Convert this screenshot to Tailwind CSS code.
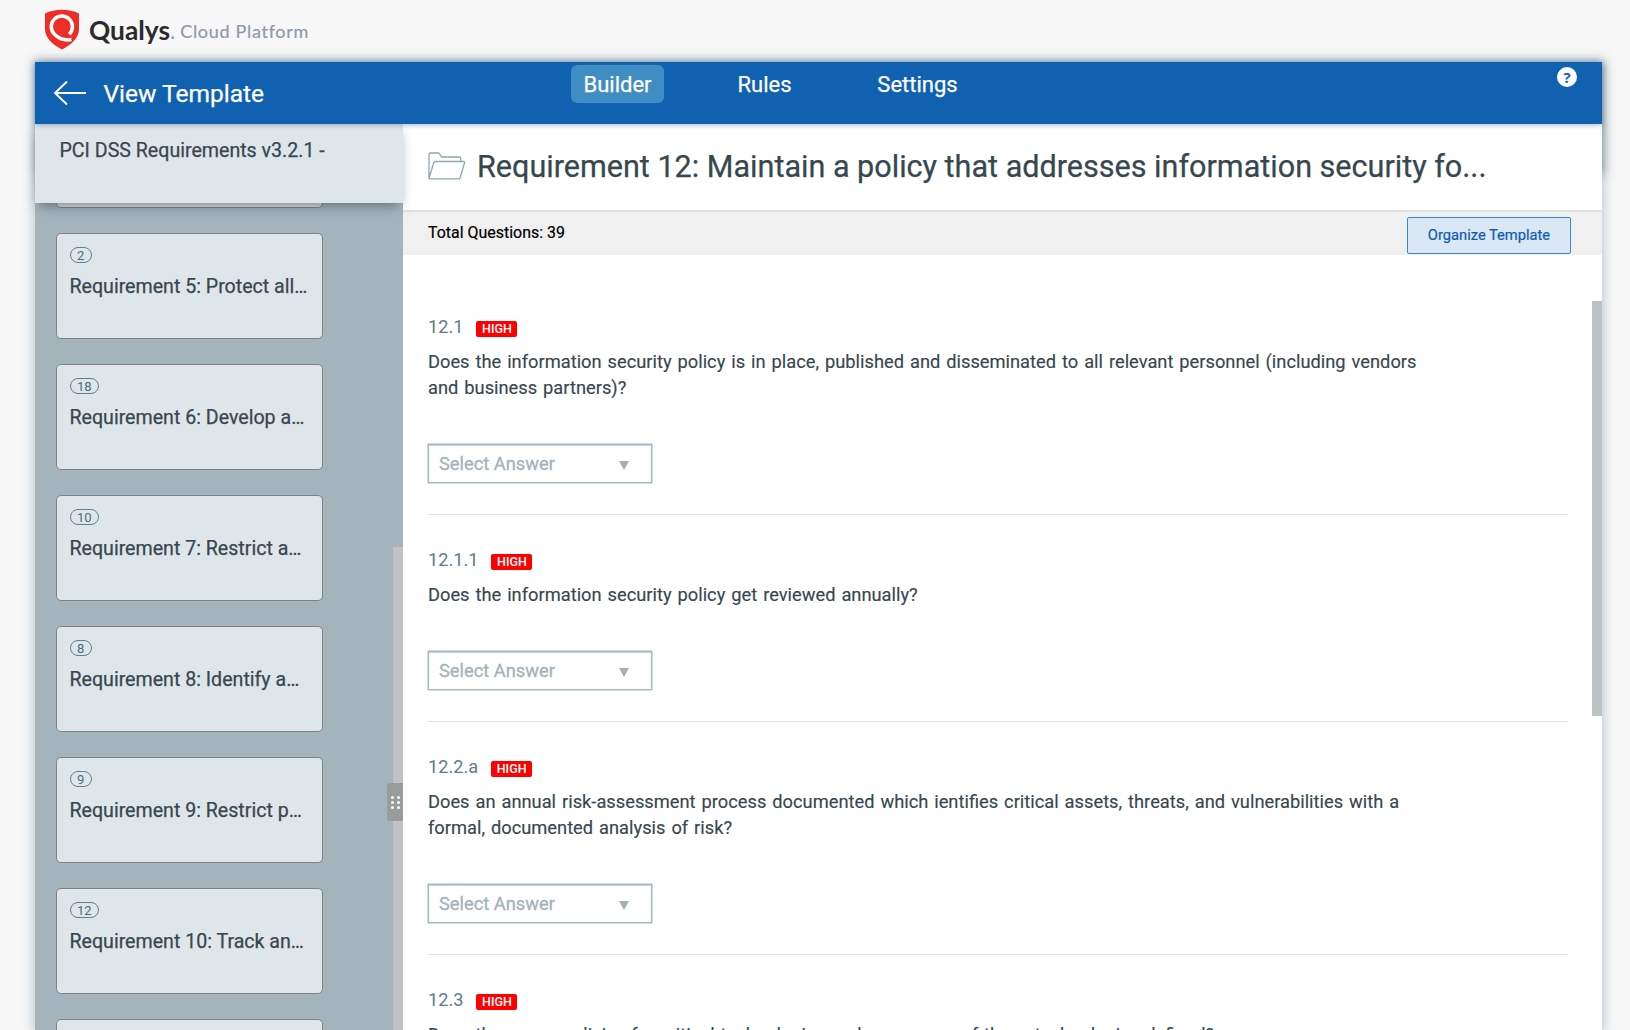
<!DOCTYPE html>
<html lang="en">
<head>
<meta charset="utf-8">
<title>View Template</title>
<script src="https://cdn.jsdelivr.net/npm/@tailwindcss/browser@4"></script>
</head>
<body class="relative flex h-[1030px] w-[1630px] flex-col overflow-hidden bg-[#f7f7f7] font-['Roboto',sans-serif] text-[#37474f]">

<!-- Brand bar -->
<header class="flex h-[62px] shrink-0 items-center pl-[44px] font-['Lato',sans-serif]">
  <svg class="mb-[3px] h-[41px] w-[36px] shrink-0" viewBox="0 0 36 41" fill="none">
    <path d="M1 4.500C6 2 12 .8 18 .8S30 2 35 4.500V20c0 9-7.500 15.500-17 20.500C8.500 35.500 1 29 1 20Z" fill="#ed2e26"/>
    <path d="M25.200 25.200A10.600 10.600 0 1 0 10.500 25.200C14 28.800 20 31.800 27.500 30.600" stroke="#fff" stroke-width="3.500"/>
    <path d="M19.500 24.800c1.600 1.700 3.600 2.600 6.800 2.500" stroke="#ed2e26" stroke-width="1.800"/>
  </svg>
  <span class="mb-[2px] ml-[9px] text-[26.300px] leading-[30px] font-bold text-[#2b2b2b]">Qualys</span>
  <span class="mr-[5px] text-[22px] leading-[30px] text-[#8f99aa]">.</span>
  <span class="text-[18px] leading-[30px] tracking-[0.700px] text-[#8f99aa] [-webkit-text-stroke:0.200px_#8f99aa]">Cloud Platform</span>
</header>

<!-- Application window -->
<div class="relative ml-[35px] h-[968px] w-[1567px] shrink-0 shadow-[0_0_10px_2px_rgba(120,150,170,0.45)]">
  <div class="absolute inset-x-0 top-0 h-[112px] shadow-[2px_0_9px_0px_rgba(70,95,115,0.5)]"></div>
  <div class="relative flex h-full flex-col bg-white">

    <!-- Title bar -->
    <div class="relative z-20 flex h-[62px] shrink-0 items-start bg-[#1061b0] text-white shadow-[0_1px_5px_rgba(60,90,130,0.45)]">
      <div class="flex h-[62px] w-[536px] items-center pl-[18px]">
        <svg class="h-[26px] w-[34px]" viewBox="0 0 34 26" fill="none" stroke="#fff" stroke-width="1.900"><path d="M33 13H2M14 1.500 2 13l12 11.500"/></svg>
        <span class="mt-[1px] ml-[16.500px] text-[24.500px] leading-8 [-webkit-text-stroke:0.250px_#fff]">View Template</span>
      </div>
      <nav class="mt-[3px] flex gap-[61px] text-[22px] leading-[39px] [-webkit-text-stroke:0.250px_#fff]">
        <a class="h-[38px] w-[93px] rounded-md bg-[#3f8dc3] text-center">Builder</a>
        <a class="h-[38px] w-[79px] text-center">Rules</a>
        <a class="h-[38px] w-[105px] text-center">Settings</a>
      </nav>
      <span class="mt-[5px] mr-[25px] ml-auto flex size-5 items-center justify-center rounded-full bg-white font-['Open_Sans',sans-serif] text-[15px] leading-5 font-bold text-[#1061b0]">?</span>
    </div>

    <div class="flex min-h-0 flex-1">
      <!-- Requirement list -->
      <aside class="relative flex w-[368px] shrink-0 flex-col bg-[#a4b4bd]">
        <div class="relative z-10 h-[79px] shrink-0 bg-[#dfe6e9] pt-[15px] pl-[24.500px] text-[19.600px] leading-6 shadow-[0_6px_12px_-4px_rgba(50,65,75,0.65)] [-webkit-text-stroke:0.250px_#37474f]">PCI DSS Requirements v3.2.1 -</div>
        <div id="cards" class="flex min-h-0 flex-1 flex-col gap-[25px] overflow-hidden pl-[21px]">
          <div class="h-[5px] w-[267px] shrink-0 rounded-b-[5px] border border-t-0 border-[#7d8285] bg-[#dfe6e9]"></div>
        </div>
        <div class="absolute right-0 bottom-0 h-[483px] w-[10px] bg-[#bfc3c5]"></div>
        <div class="absolute top-[659px] right-0 grid h-[38px] w-[16px] grid-cols-[3px_3px] content-center justify-center gap-x-[3px] gap-y-[2px] rounded-l-[3px] bg-[#999b9d]">
          <i class="size-[3px] rounded-full bg-white"></i><i class="size-[3px] rounded-full bg-white"></i>
          <i class="size-[3px] rounded-full bg-white"></i><i class="size-[3px] rounded-full bg-white"></i>
          <i class="size-[3px] rounded-full bg-white"></i><i class="size-[3px] rounded-full bg-white"></i>
        </div>
      </aside>

      <!-- Questions -->
      <main class="relative flex min-w-0 flex-1 flex-col">
        <div class="flex h-[86px] shrink-0 items-center pl-[25px]">
          <svg class="mb-[2px] h-[28px] w-[38px]" viewBox="0 0 38 28" fill="none" stroke="#8fa9ae" stroke-width="1.300" stroke-linejoin="round"><path d="M1 26.500V2.200C1 1.400 1.500 1 2.200 1h8c.7 0 1 .3 1.400.9L13.500 5H31c1.200 0 1.800.6 1.800 1.700V9.500M1 26.500 5.600 11c.3-1 .8-1.500 1.800-1.500h28c1 0 1.400.6 1.100 1.500l-4.300 14.500c-.3 1-.8 1.400-1.800 1.400H2C1.300 26.900 1 26.900 1 26.500Z"/></svg>
          <h1 class="ml-[11px] text-[30.570px] leading-9 [-webkit-text-stroke:0.250px_#37474f]">Requirement 12: Maintain a policy that addresses information security fo...</h1>
        </div>
        <div class="flex h-[45px] shrink-0 items-start border-t-2 border-[#e1e1e1] bg-[#f0f0f0] pr-[31px] pl-[25px]">
          <span class="mt-[9px] text-[15.950px] leading-6 text-black [-webkit-text-stroke:0.200px_#000]">Total Questions: 39</span>
          <button class="mt-[5px] ml-auto h-[37px] w-[164px] rounded-[2px] border border-[#3d85cf] bg-[#dae7f4] text-[14.700px] text-[#0d5bb5] [-webkit-text-stroke:0.200px_#0d5bb5]">Organize Template</button>
        </div>
        <div id="questions" class="min-h-0 flex-1 overflow-hidden pt-[27px] pr-[34px] pl-[25px]"></div>
        <div class="absolute top-[177px] right-0 h-[415px] w-[10px] bg-[#bcc1c3]"></div>
      </main>
    </div>
  </div>
</div>

<script>
const requirements = [
  [2, 'Requirement 5: Protect all…'],
  [18, 'Requirement 6: Develop a…'],
  [10, 'Requirement 7: Restrict a…'],
  [8, 'Requirement 8: Identify a…'],
  [9, 'Requirement 9: Restrict p…'],
  [12, 'Requirement 10: Track an…'],
];
const card = (body) => `
  <div class="h-[106px] w-[267px] shrink-0 rounded-[5px] border border-[#7d8285] bg-[#dfe6e9] pt-[13px] pl-[12.500px]">${body}</div>`;
document.getElementById('cards').insertAdjacentHTML('beforeend', requirements.map(([count, title]) => card(`
    <div class="flex h-[16px] w-fit items-center rounded-full border border-[#5b8094] px-[6.500px] text-[13px] leading-none text-[#45707f]">${count}</div>
    <div class="mt-[12px] text-[19.600px] leading-6 [-webkit-text-stroke:0.250px_#37474f]">${title}</div>`)).join('') + card(''));

const questions = [
  ['12.1', 'Does the information security policy is in place, published and disseminated to all relevant personnel (including vendors<br>and business partners)?'],
  ['12.1.1', 'Does the information security policy get reviewed annually?'],
  ['12.2.a', 'Does an annual risk-assessment process documented which ientifies critical assets, threats, and vulnerabilities with a<br>formal, documented analysis of risk?'],
  ['12.3', 'Does the usage policies for critical technologies and proper use of these technologies defined?'],
];
document.getElementById('questions').innerHTML = questions.map(([id, text]) => `
  <section class="border-b border-[#dfe1e2] pt-[33px] pb-[31px]">
    <div class="flex h-6 items-start text-[18.200px] leading-6 text-[#607d8b]">${id}<span class="mt-[6px] ml-[13px] h-[16px] w-[41px] rounded-[2px] bg-[#fe0000] text-center text-[12.500px] leading-[16px] font-medium text-white">HIGH</span></div>
    <p class="mt-[10px] text-[18.300px] leading-[26px] whitespace-nowrap [word-spacing:1.400px] [-webkit-text-stroke:0.150px_#37474f]">${text}</p>
    <div class="mt-[43px] flex h-[39px] w-[224px] items-center border border-[#a5b8bf] pr-[22px] pl-[10px] text-[18.300px] text-[#a3b3ba] shadow-[inset_0_1px_1px_rgba(130,155,165,0.45),0_0_0_0.500px_#a5b8bf] [-webkit-text-stroke:0.300px_#a3b3ba]">Select Answer
      <svg class="mt-[3px] ml-auto h-[9px] w-[10px]" viewBox="0 0 10 9"><path d="M0 0h10L5 9Z" fill="#a0b0b7"/></svg>
    </div>
  </section>`).join('');
</script>
</body>
</html>
